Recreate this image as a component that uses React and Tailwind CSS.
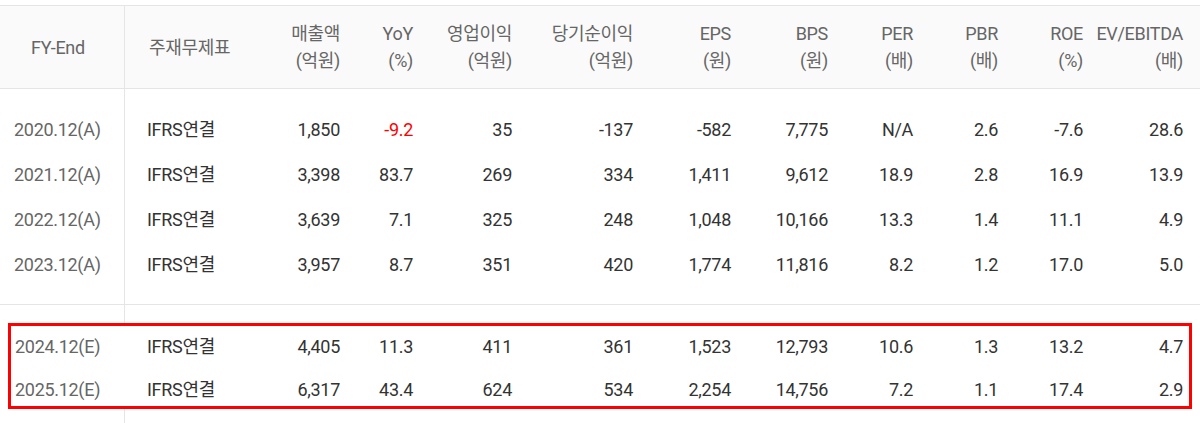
import React from 'react';

const heads = [
  ['매출액', '(억원)'],
  ['YoY', '(%)'],
  ['영업이익', '(억원)'],
  ['당기순이익', '(억원)'],
  ['EPS', '(원)'],
  ['BPS', '(원)'],
  ['PER', '(배)'],
  ['PBR', '(배)'],
  ['ROE', '(%)'],
  ['EV/EBITDA', '(배)'],
];

const actual = [
  ['2020.12(A)', '1,850', '-9.2', '35', '-137', '-582', '7,775', 'N/A', '2.6', '-7.6', '28.6'],
  ['2021.12(A)', '3,398', '83.7', '269', '334', '1,411', '9,612', '18.9', '2.8', '16.9', '13.9'],
  ['2022.12(A)', '3,639', '7.1', '325', '248', '1,048', '10,166', '13.3', '1.4', '11.1', '4.9'],
  ['2023.12(A)', '3,957', '8.7', '351', '420', '1,774', '11,816', '8.2', '1.2', '17.0', '5.0'],
];

const estimate = [
  ['2024.12(E)', '4,405', '11.3', '411', '361', '1,523', '12,793', '10.6', '1.3', '13.2', '4.7'],
  ['2025.12(E)', '6,317', '43.4', '624', '534', '2,254', '14,756', '7.2', '1.1', '17.4', '2.9'],
];

const cols = 'grid grid-cols-[125px_125px_90px_73px_99px_121px_98px_97px_85px_85px_85px_100px]';
const boxCols = 'grid grid-cols-[114px_125px_90px_73px_99px_121px_98px_97px_85px_85px_85px_100px]';

const Spacer = ({ className = '' }) => (
  <div className={`flex ${className}`}>
    <div className="w-[125px] border-r border-[#e5e5e5]" />
  </div>
);

const Cells = ({ row }) => (
  <>
    <div className="pl-[22px] text-[#333] whitespace-nowrap">IFRS연결</div>
    {row.slice(1).map((v, i) => (
      <div key={i} className={`text-right ${v === '-9.2' ? 'text-[#ff0000]' : 'text-[#333]'}`}>
        {v}
      </div>
    ))}
  </>
);

export default function App() {
  return (
    <div
      className="w-[1200px] h-[423px] bg-white overflow-hidden text-[18px] leading-[26px] tracking-[-0.3px]"
      style={{ fontFamily: "Roboto, 'Noto Sans CJK KR', sans-serif" }}
    >
      <div className="h-[5px]" />
      <div className={`${cols} h-[84px] border-y border-[#e5e5e5] bg-[#fafafa] text-[#666] leading-[27px]`}>
        <div className="flex items-center pl-[31px] border-r border-[#e5e5e5]">FY-End</div>
        <div className="flex items-center pl-[24px]">주재무제표</div>
        {heads.map(([a, b]) => (
          <div key={a} className="flex flex-col justify-center items-end whitespace-nowrap">
            <span>{a}</span>
            <span>{b}</span>
          </div>
        ))}
      </div>

      <Spacer className="h-[18px]" />
      {actual.map((row) => (
        <div key={row[0]} className={`${cols} h-[45px] items-center`}>
          <div className="h-full flex items-center pl-[14px] text-[#666] border-r border-[#e5e5e5]">{row[0]}</div>
          <Cells row={row} />
        </div>
      ))}
      <Spacer className="h-[18px] border-b border-[#e5e5e5]" />
      <Spacer className="h-[18px]" />

      <div className="mx-[8px] border-[3px] border-[#ff0000] bg-white h-[86px]">
        <div className={`${boxCols} h-[42px] items-center`}>
          <div className="pl-[4px] text-[#666]">{estimate[0][0]}</div>
          <Cells row={estimate[0]} />
        </div>
        <div className={`${boxCols} h-[38px] items-start pt-[9px]`}>
          <div className="pl-[4px] text-[#666]">{estimate[1][0]}</div>
          <Cells row={estimate[1]} />
        </div>
      </div>
      <Spacer className="h-[14px]" />
    </div>
  );
}
